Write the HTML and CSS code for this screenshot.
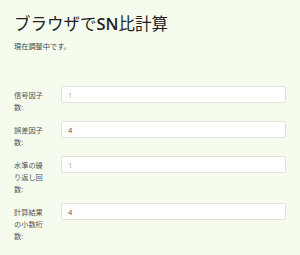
FILE: index.html
```
<!DOCTYPE html>
<html lang="ja">
<head>
    <meta charset="UTF-8">
    <meta name="viewport" content="width=device-width, initial-scale=1.0">
    <title>ブラウザでSN比計算</title>
    <link rel="stylesheet" href="styles.css">
</head>
<body>
    <div class="container">
        <h1>ブラウザで<span class="latin">SN</span>比計算</h1>
        <p class="lead">現在調整中です。</p>

        <form class="calc-form" autocomplete="off">
            <div class="form-row">
                <label for="signal">信号因子数:</label>
                <input type="text" id="signal" placeholder="1">
            </div>
            <div class="form-row">
                <label for="noise">誤差因子数:</label>
                <input type="text" id="noise" value="4">
            </div>
            <div class="form-row">
                <label for="repeat">水準の繰り返し回数:</label>
                <input type="text" id="repeat" placeholder="1">
            </div>
            <div class="form-row">
                <label for="digits">計算結果の小数桁数:</label>
                <input type="text" id="digits" value="4">
            </div>
        </form>
    </div>
</body>
</html>
```
FILE: styles.css
```
body {
    margin: 0;
    background-color: #f5fcee;
    font-family: "Open Sans", "Noto Sans CJK JP", sans-serif;
    color: #333;
}

.container {
    padding: 0 14px;
}

h1 {
    margin: 0;
    padding-top: 12px;
    font-size: 16.5px;
    font-weight: normal;
    line-height: 24px;
    color: #222;
}

h1 .latin {
    font-weight: 600;
}

.lead {
    margin: 4px 0 0 0;
    font-size: 7.2px;
    line-height: 12px;
    color: #444;
}

.calc-form {
    margin-top: 34px;
}

.form-row {
    display: flex;
    align-items: flex-start;
    margin-bottom: 8px;
}

.form-row label {
    flex: 0 0 32px;
    padding-right: 15px;
    padding-top: 3px;
    font-size: 7.2px;
    line-height: 12px;
    color: #555;
}

.form-row input {
    flex: 1;
    min-width: 0;
    height: 17px;
    box-sizing: border-box;
    padding: 0 6px;
    border: 1px solid #e2e2dc;
    border-radius: 2px;
    background-color: #fff;
    font-family: "Open Sans", sans-serif;
    font-size: 7.5px;
    color: #555;
    outline: none;
    box-shadow: none;
    -webkit-appearance: none;
    appearance: none;
}

.form-row input::placeholder {
    color: #aaa;
}
```
